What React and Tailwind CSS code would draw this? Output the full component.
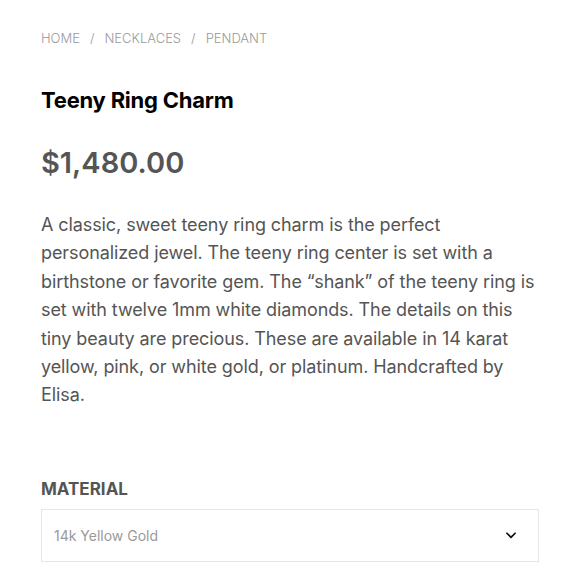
export default function App() {
  return (
    <main className="min-h-screen w-full bg-white px-[41px] pt-[28px]">
      <nav className="flex items-center gap-[9px] text-[13px] leading-[20px] text-[#9a9a9a] font-['Inter',sans-serif] font-light">
        <span>HOME</span>
        <span className="px-[1px]">/</span>
        <span>NECKLACES</span>
        <span className="px-[1px]">/</span>
        <span>PENDANT</span>
      </nav>
      <h1 className="mt-[37px] text-[22px] leading-[30px] font-bold text-black font-['Inter',sans-serif] tracking-[-0.01em]">
        Teeny Ring Charm
      </h1>
      <div className="mt-[30px] text-[29px] leading-[36px] font-semibold text-[#555555] font-['Inter',sans-serif]">
        $1,480.00
      </div>
      <p className="mt-[30px] w-[495px] text-[18px] leading-[28.4px] text-[#555555] font-['Inter',sans-serif] tracking-[-0.005em]">
        A classic, sweet teeny ring charm is the perfect personalized jewel. The teeny ring center is set with a birthstone or favorite gem. The “shank” of the teeny ring is set with twelve 1mm white diamonds. The details on this tiny beauty are precious. These are available in 14 karat yellow, pink, or white gold, or platinum. Handcrafted by Elisa.
      </p>
      <div className="mt-[67px] text-[17px] leading-[24px] font-bold text-[#555555] font-['Inter',sans-serif]">
        MATERIAL
      </div>
      <div className="mt-[8px] flex h-[53px] w-[498px] items-center justify-between border border-[#e6e6e6] pl-[12px] pr-[20px]">
        <span className="text-[14px] text-[#9a9a9a] font-['Inter',sans-serif]">14k Yellow Gold</span>
        <svg width="14" height="14" viewBox="0 0 24 24" fill="none" stroke="#111" strokeWidth="3" strokeLinecap="round" strokeLinejoin="round">
          <path d="M5 9l7 7 7-7" />
        </svg>
      </div>
    </main>
  );
}
